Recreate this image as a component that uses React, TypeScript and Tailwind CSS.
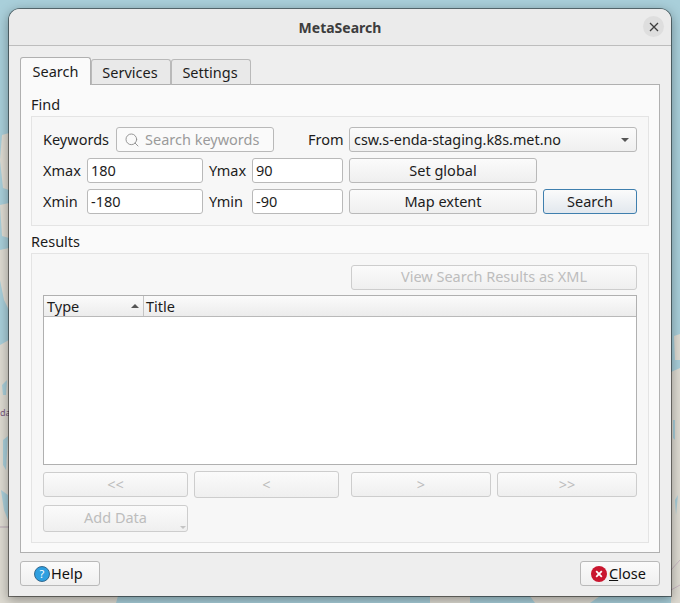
import { Search } from "lucide-react";

const font = "font-['Noto_Sans',sans-serif]";

function Btn({ label, className = "", disabled = false }: { label: string; className?: string; disabled?: boolean }) {
  return (
    <div
      className={`flex h-[25px] items-center justify-center rounded-[3px] border bg-gradient-to-b from-[#fbfbfb] to-[#efefef] text-[14.5px] ${
        disabled ? "border-[#cdcdcd] text-[#bdbdbd]" : "border-[#b9b9b9] text-[#1c1c1c]"
      } ${className}`}
    >
      {label}
    </div>
  );
}

function Input({ value, className = "" }: { value: string; className?: string }) {
  return (
    <div className={`flex h-[25px] items-center rounded-[3px] border border-[#b9b9b9] bg-white pl-[3px] text-[14.5px] text-[#1c1c1c] ${className}`}>
      {value}
    </div>
  );
}

// blurred map that shows round the dialog
function MapBackdrop() {
  return (
    <svg className="absolute inset-0" width="680" height="603" viewBox="0 0 680 603">
      <rect width="680" height="603" fill="#a9cfda" />
      <g fill="#dedbd2">
        <path d="M2 135 L9 133 L9 190 L3 188 L0 160Z" />
        <path d="M0 205 L9 203 L9 238 L2 236Z" />
        <path d="M0 250 L9 248 L9 310 L4 300 L0 280Z" />
        <path d="M0 345 L9 340 L9 603 L0 603Z" />
        <path d="M671 372 L680 368 L680 603 L671 603Z" />
        <path d="M674 336 L680 334 L680 360 L675 360Z" />
        <path d="M0 596 L118 596 L116 603 L0 603Z" />
        <path d="M430 596 L470 596 L470 603 L430 603Z" />
        <path d="M530 596 L600 596 L590 603 L535 603Z" />
      </g>
      <g fill="#a9cfda">
        <path d="M2 385 L7 380 L6 395 L3 395Z" />
        <path d="M3 440 L8 436 L6 470 L3 465Z" />
        <path d="M1 490 L8 495 L8 520 L4 510Z" />
        <path d="M673 420 L675 420 L675 440 L673 438Z" />
        <path d="M675 500 L678 495 L676 515Z" />
      </g>
      <path d="M0 527 L9 527" stroke="#b7a7b4" />
      <path d="M671 570 L680 560 M671 590 L680 585" stroke="#c9b8c2" />
      <text x="0" y="416" fontSize="9" fill="#7a5a80">da</text>
    </svg>
  );
}

export default function App() {
  return (
    <div className={`relative h-[603px] w-[680px] overflow-hidden ${font}`}>
      <MapBackdrop />
      <div className="relative ml-[8px] mt-[8px] flex h-[589px] w-[664px] flex-col overflow-hidden rounded-t-[12px] border border-black/45 bg-[#eeeeee] bg-clip-padding shadow-[0_3px_12px_rgba(0,0,0,0.35)]">
        <div className="relative flex h-[37px] shrink-0 items-center justify-center border-b border-[#bdbdbd] bg-[#ebebeb]">
          <span className="text-[14px] font-bold text-[#3d3d3d]">MetaSearch</span>
          <div className="absolute right-[7px] top-[7px] flex h-[21px] w-[21px] items-center justify-center rounded-full bg-[#dedede]">
            <svg width="10" height="10" viewBox="0 0 10 10">
              <path d="M1 1L9 9M9 1L1 9" stroke="#3d3d3d" strokeWidth="1.3" />
            </svg>
          </div>
        </div>
        <div className="flex flex-1 flex-col px-[11px] pt-[11px]">
          <div className="relative z-10 flex h-[28px] items-end text-[14.5px] text-[#1c1c1c]">
            <div className="flex h-[28px] w-[71px] items-center justify-center rounded-t-[3px] border border-b-0 border-[#b0b0b0] bg-[#fafafa]">Search</div>
            <div className="flex h-[26px] w-[80px] items-center justify-center rounded-t-[3px] border border-[#b9b9b9] border-b-[#b0b0b0] bg-[#e9e9e9] pr-[2px] pt-[2px]">Services</div>
            <div className="flex h-[26px] w-[80px] items-center justify-center rounded-t-[3px] border border-[#b9b9b9] border-b-[#b0b0b0] bg-[#e9e9e9] pr-[2px] pt-[2px]">Settings</div>
          </div>
          <div className="-mt-px flex h-[469px] flex-col border border-[#b0b0b0] bg-[#fafafa] px-[10px] text-[14.5px] text-[#1c1c1c]">
            <div className="mt-[9px] h-[20px] leading-[20px]">Find</div>
            <div className="mt-[2px] flex h-[110px] flex-col gap-[6px] border border-[#e4e4e4] bg-[#f7f7f7] px-[11px] pt-[10px]">
              <div className="flex h-[25px] items-center">
                <span className="w-[73px]">Keywords</span>
                <div className="flex h-[25px] w-[158px] items-center rounded-[3px] border border-[#b9b9b9] bg-[#fafafa] pl-[7px] text-[#9a9a9a]">
                  <Search size={16} strokeWidth={1.4} className="mr-[5px] text-[#8f8f8f]" />
                  Search keywords
                </div>
                <span className="ml-[34px] w-[41px]">From</span>
                <div className="flex h-[25px] w-[288px] items-center justify-between rounded-[3px] border border-[#b9b9b9] bg-gradient-to-b from-[#fbfbfb] to-[#efefef] pl-[4px] pr-[7px]">
                  <span className="text-[14.35px]">csw.s-enda-staging.k8s.met.no</span>
                  <span className="h-0 w-0 border-x-[4px] border-t-[4px] border-x-transparent border-t-[#555555]" />
                </div>
              </div>
              <div className="flex h-[25px] items-center">
                <span className="w-[44px]">Xmax</span>
                <Input value="180" className="w-[116px]" />
                <span className="ml-[6px] w-[43px]">Ymax</span>
                <Input value="90" className="w-[91px]" />
                <Btn label="Set global" className="ml-[6px] w-[188px]" />
              </div>
              <div className="flex h-[25px] items-center">
                <span className="w-[44px]">Xmin</span>
                <Input value="-180" className="w-[116px]" />
                <span className="ml-[6px] w-[43px]">Ymin</span>
                <Input value="-90" className="w-[91px]" />
                <Btn label="Map extent" className="ml-[6px] w-[188px]" />
                <div className="ml-[6px] flex h-[25px] w-[94px] items-center justify-center rounded-[3px] border border-[#3f7fae] bg-gradient-to-b from-[#fbfbfb] to-[#e2e8ee]">Search</div>
              </div>
            </div>
            <div className="mt-[5px] h-[20px] leading-[20px]">Results</div>
            <div className="mt-[2px] flex h-[290px] flex-col border border-[#e4e4e4] bg-[#f7f7f7] px-[11px] pt-[11px]">
              <Btn label="View Search Results as XML" disabled className="ml-auto w-[286px] pb-[2px]" />
              <div className="mt-[5px] flex h-[170px] flex-col border border-[#b0b0b0] bg-white">
                <div className="flex h-[21px] shrink-0 border-b border-[#b9b9b9] bg-gradient-to-b from-[#fbfbfb] to-[#ececec] leading-[20px]">
                  <div className="flex w-[100px] items-center justify-between border-r border-[#c4c4c4] px-[3px]">
                    Type
                    <span className="mr-[1px] h-0 w-0 border-x-[4px] border-b-[4px] border-x-transparent border-b-[#555555]" />
                  </div>
                  <div className="px-[2px]">Title</div>
                </div>
              </div>
              <div className="mt-[7px] flex gap-[6px]">
                <Btn label="<<" disabled className="w-[145px]" />
                <Btn label="<" disabled className="-mt-px h-[27px] w-[145px]" />
                <Btn label=">" disabled className="ml-[6px] w-[140px]" />
                <Btn label=">>" disabled className="w-[140px]" />
              </div>
              <div className="relative mt-[7px] w-[145px]">
                <Btn label="Add Data" disabled className="h-[27px] w-[145px] pb-[2px]" />
                <span className="absolute bottom-[3px] right-[2px] h-0 w-0 border-x-[3px] border-t-[3px] border-x-transparent border-t-[#c4c4c4]" />
              </div>
            </div>
          </div>
          <div className="mt-[8px] flex justify-between text-[14.5px] text-[#111111]">
            <div className="flex h-[25px] w-[80px] items-center gap-[1px] rounded-[3px] border border-[#b9b9b9] bg-gradient-to-b from-[#fbfbfb] to-[#efefef] pl-[13px]">
              <svg width="16" height="16" viewBox="0 0 16 16">
                <circle cx="8" cy="8" r="7.5" fill="#2f9fe0" stroke="#2a5f85" strokeWidth="0.9" />
                <text x="8" y="12" textAnchor="middle" fontSize="11" fill="#ffffff">?</text>
              </svg>
              Help
            </div>
            <div className="flex h-[25px] w-[80px] items-center gap-[2px] rounded-[3px] border border-[#b9b9b9] bg-gradient-to-b from-[#fbfbfb] to-[#efefef] pl-[10px]">
              <svg width="16" height="16" viewBox="0 0 16 16">
                <circle cx="8" cy="8" r="8" fill="#c9162f" />
                <path d="M5.2 5.2L10.8 10.8M10.8 5.2L5.2 10.8" stroke="#ffffff" strokeWidth="1.8" />
              </svg>
              <span><span className="underline">C</span>lose</span>
            </div>
          </div>
        </div>
      </div>
    </div>
  );
}
